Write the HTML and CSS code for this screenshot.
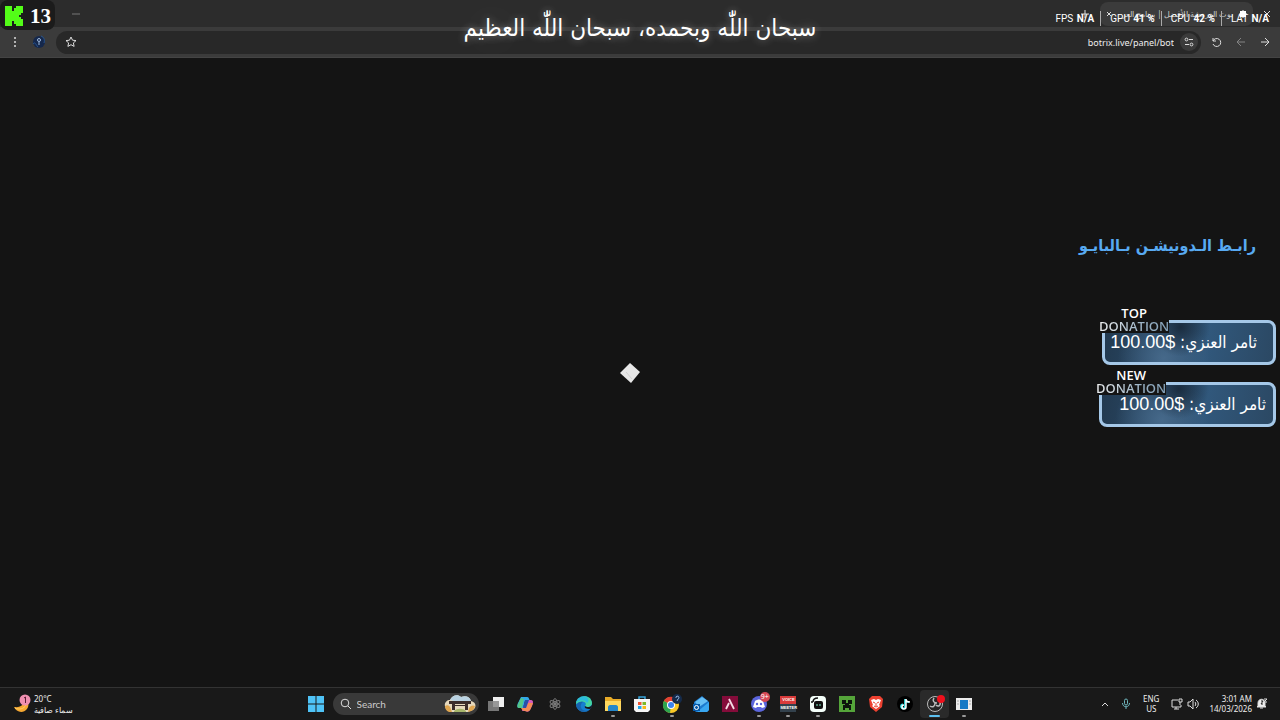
FILE: index.html
```html
<!DOCTYPE html>
<html lang="ar">
<head>
  <meta charset="UTF-8">
  <meta name="viewport" content="width=device-width, initial-scale=1.0">
  <title>Desktop</title>
  <link rel="stylesheet" href="styles.css">
</head>
<body>

  <header class="browser" dir="rtl">
    <div class="tabs">
      <button class="win-btn" aria-label="Close window"><svg width="8" height="8" viewBox="0 0 8 8"><path d="M1 1l6 6M7 1L1 7"/></svg></button>
      <div class="tab">
        <svg class="favicon" width="8" height="8" viewBox="0 0 8 8"><path d="M4 0l1 1 2 0v2l1 1-1 1v2H5L4 8 3 7H1V5L0 4l1-1V1h2z" fill="#fff" stroke="none"/></svg>
        <span class="tab-title">بوت الدردشة الأفضل | برنامج العر</span>
        <button class="tab-close" aria-label="Close tab"><svg width="6" height="6" viewBox="0 0 6 6"><path d="M1 1l4 4M5 1L1 5"/></svg></button>
      </div>
      <button class="new-tab" aria-label="New tab"><svg width="8" height="8" viewBox="0 0 8 8"><path d="M4 0v8M0 4h8"/></svg></button>
      <button class="minimize" aria-label="Minimize"><svg width="8" height="8" viewBox="0 0 8 8"><path d="M0 4h8"/></svg></button>
    </div>
    <div class="toolbar">
      <button class="tool" aria-label="Back"><svg width="10" height="10" viewBox="0 0 10 10"><path d="M1 5h8M5 1l4 4-4 4"/></svg></button>
      <button class="tool dim" aria-label="Forward"><svg width="10" height="10" viewBox="0 0 10 10"><path d="M9 5H1M5 1L1 5l4 4"/></svg></button>
      <button class="tool" aria-label="Reload"><svg width="10" height="10" viewBox="0 0 10 10"><path d="M1 1v3h3M1 4a4 4 0 1 1 0 3"/></svg></button>
      <div class="address">
        <button class="site-info" aria-label="Site information"><svg width="10" height="10" viewBox="0 0 10 10"><circle cx="2.500" cy="2.500" r="1.400"/><path d="M5 2.500h4M1 7.500h4"/><circle cx="7.500" cy="7.500" r="1.400"/></svg></button>
        <input class="url" type="text" dir="ltr" value="botrix.live/panel/bot" aria-label="Address">
        <button class="star" aria-label="Bookmark"><svg width="12" height="12" viewBox="0 0 12 12"><path d="M6 1l1.500 3.200 3.500.4-2.600 2.300.7 3.500L6 8.700l-3.100 1.700.7-3.500L1 4.600l3.500-.4z"/></svg></button>
      </div>
      <button class="tool profile" aria-label="Profile"><svg width="14" height="14" viewBox="0 0 14 14"><circle cx="7" cy="7" r="6" fill="#15284c" stroke="none"/><path d="M1 9c2-3 3 1 5 3M9 1c3 1 4 4 3 7" stroke="#28558f"/><circle cx="7" cy="5" r="1.500" stroke="#9db8dc"/><path d="M7 7v3" stroke="#9db8dc"/></svg></button>
      <button class="tool" aria-label="Menu"><svg width="4" height="12" viewBox="0 0 4 12"><g fill="#ddd" stroke="none"><circle cx="2" cy="2" r="1"/><circle cx="2" cy="6" r="1"/><circle cx="2" cy="10" r="1"/></g></svg></button>
    </div>
  </header>

  <main class="page">
    <svg class="loader" width="20" height="20" viewBox="0 0 20 20"><path d="M10 0l10 9-9 11L0 10z" fill="#e8e8e8"/><path d="M6 9l6 7" stroke="#d2d2d2"/></svg>
  </main>

  <!-- stream overlays -->
  <div class="viewers">
    <svg width="18" height="20" viewBox="0 0 18 20"><path d="M0 0h7v5h2V2h2V0h7v7h-2v2h-2v2h2v2h2v7h-7v-2H9v-3H7v5H0z" fill="#53fc18"/></svg>
    <span>13</span>
  </div>

  <div class="phrase" dir="rtl">سبحان اللّٰه وبحمده، سبحان اللّٰه العظيم</div>

  <ul class="stats">
    <li>FPS <b>N/A</b></li>
    <li>GPU <b>41 %</b></li>
    <li>CPU <b>42 %</b></li>
    <li>LAT <b>N/A</b></li>
  </ul>

  <aside class="widgets">
    <p class="bio-link" dir="rtl">رابـط الـدونيشـن بـالبايـو</p>
    <section class="donation top">
      <h2>TOP<br><span>DONATION</span></h2>
      <p dir="rtl">ثامر العنزي: <bdi dir="ltr">100.00$</bdi></p>
    </section>
    <section class="donation new">
      <h2>NEW<br><span>DONATION</span></h2>
      <p dir="rtl">ثامر العنزي: <bdi dir="ltr">100.00$</bdi></p>
    </section>
  </aside>

  <footer class="taskbar">
    <div class="weather">
      <svg width="20" height="20" viewBox="0 0 20 20"><path d="M12 5c1 5-3 9-10 8 2 5 9 7 13 2 3-4 1-8-3-10z" fill="#f6a832"/><path d="M3 14c4 2 9 1 11-3" stroke="#ffcf62" fill="none"/><circle cx="13" cy="6" r="5.500" fill="#ef8fb0"/><path d="M12 4l1.500-1v6" stroke="#5b1d35" fill="none"/></svg>
      <div>
        <div>20°C</div>
        <div dir="rtl">سماء صافية</div>
      </div>
    </div>

    <div class="dock">
      <button class="start" aria-label="Start"><svg width="16" height="16" viewBox="0 0 16 16"><path d="M0 0h7.500v7.500H0zM8.500 0H16v7.500H8.500zM0 8.500h7.500V16H0zM8.500 8.500H16V16H8.500z" fill="#4fc3f7"/></svg></button>
      <label class="search">
        <svg width="12" height="12" viewBox="0 0 12 12"><circle cx="5" cy="5" r="3.800"/><path d="M8 8l3 3"/></svg>
        <input type="text" placeholder="Search" aria-label="Search">
        <svg class="search-art" width="32" height="18" viewBox="0 0 32 18"><path d="M2 14C-1 9 2 5 6 5c2-5 8-6 11-3 5-2 9 0 10 4 5 1 6 6 2 9l-5 2H6z" fill="#e6d9bd"/><path d="M6 5c2-5 8-6 11-3 5-2 9 0 10 4H10z" fill="#b9d2e2"/><path d="M1 11c3-2 5 0 6 3l1 3H5c-3-1-4-4-4-6zM25 13c2-3 4-3 6-2-1 4-3 5-7 6z" fill="#dfa650"/><path d="M10 16c3-3 9-3 12 0v1H10z" fill="#a6b56b"/><path d="M5 6h22v3H5zM8 9h3v6H8zM21 9h3v6h-3zM11 10h10v1H11z" fill="#3c2d2b"/></svg>
      </label>
      <div class="apps">
        <button aria-label="Task view"><svg width="18" height="18" viewBox="0 0 18 18"><path d="M6 2h11v10H6z" fill="#eee"/><path d="M1 6h11v10H1z" fill="#888" opacity=".85"/></svg></button>
        <button aria-label="Copilot"><svg width="18" height="18" viewBox="0 0 18 18"><path d="M5 2h6c2 0 2 2 3 4H9L7 13H3C1 13 1 10 2 8z" fill="#32a8e8"/><path d="M2 9l3-6 3 1-2 9H3c-2 0-2-2-1-4z" fill="#53c687"/><path d="M10 5h5c3 0 2 4 1 6l-2 4c-1 2-3 2-5 1H6z" fill="#d55bbd"/><path d="M5 13h5l2-5h5l-2 5c-1 3-3 4-6 3-2 0-3-1-4-3z" fill="#f48a53"/><path d="M9 5l-2 8h3l3-8z" fill="#2750a9"/></svg></button>
        <button aria-label="Atom"><svg width="18" height="18" viewBox="0 0 18 18" fill="none" stroke="#777"><ellipse cx="9" cy="9" rx="2" ry="5.500"/><ellipse cx="9" cy="9" rx="2" ry="5.500" transform="rotate(60 9 9)"/><ellipse cx="9" cy="9" rx="2" ry="5.500" transform="rotate(120 9 9)"/><circle cx="9" cy="9" r="1" fill="#aaa"/></svg></button>
        <button aria-label="Edge"><svg width="18" height="18" viewBox="0 0 18 18"><circle cx="9" cy="9" r="8" fill="#167fd0"/><path d="M1 9C1 0 16-2 17 8c0 4-5 5-7 3 3-4-3-7-9-2z" fill="#45d5a0"/><path d="M1 8c1-5 6-7 10-6 3 1 3 5 1 6-3-4-8-3-11 0z" fill="#2bbbdc"/><path d="M8 7c-3 2-3 6 0 8 2 1 5 1 7-1-4 5-13 3-14-4 2-3 5-4 7-3z" fill="#1764ae"/><path d="M10 11c2 2 6 1 7-1 0 2-1 3-2 4-4 0-6-1-5-3z" fill="#171717"/></svg></button>
        <button class="open" aria-label="Files"><svg width="18" height="18" viewBox="0 0 18 18"><path d="M1 2h6l2 2h8v12H1z" fill="#e9ac28"/><path d="M1 6h16v10H1z" fill="#ffd85f"/><path d="M4 16v-4c0-1 1-2 2-2h6c1 0 2 1 2 2v4z" fill="#2487cc"/></svg></button>
        <button aria-label="Store"><svg width="18" height="18" viewBox="0 0 18 18"><path d="M6 5V2h6v3" fill="none" stroke="#38a5dc" stroke-width="1.500"/><path d="M1 4h16v11l-2 2H3l-2-2z" fill="#f5f5f5"/><path d="M5 7h3.500v3H5z" fill="#ee5533"/><path d="M9.500 7H13v3H9.500z" fill="#7cb928"/><path d="M5 11h3.500v3H5z" fill="#20a4e8"/><path d="M9.500 11H13v3H9.500z" fill="#f9b916"/></svg></button>
        <button class="open" aria-label="Chrome"><svg width="20" height="20" viewBox="0 0 20 20"><circle cx="9" cy="11" r="8" fill="#fbc926"/><path d="M9 11L2 7a8 8 0 0 1 14 0z" fill="#e44134"/><path d="M9 11l-1 8A8 8 0 0 1 2 7z" fill="#2ea44f"/><circle cx="9" cy="11" r="4" fill="#fff"/><circle cx="9" cy="11" r="3" fill="#3d83ed"/><circle cx="15" cy="5" r="5" fill="#152b4b"/><path d="M14 4a1.500 1.500 0 1 1 2 1l-1 2" stroke="#8fb2dc" fill="none"/></svg></button>
        <button aria-label="Outlook"><svg width="18" height="18" viewBox="0 0 18 18"><path d="M2 7l8-6 7 6v8l-2 2H4l-2-2z" fill="#1c79ce"/><path d="M3 7l7-5 6 4-9 6z" fill="#66bff5"/><path d="M17 7v8l-2 2H5z" fill="#39a7f1"/><path d="M1 9h7v7H1z" fill="#075aa9"/><circle cx="4.500" cy="12.500" r="2" fill="none" stroke="#fff"/></svg></button>
        <button aria-label="AMD"><svg width="18" height="18" viewBox="0 0 18 18"><path d="M1 1h16v16H1z" fill="#840c3a"/><path d="M5 14L8 8M8 4l5 10" fill="none" stroke="#f5dce5" stroke-width="1.800"/></svg></button>
        <button class="open" aria-label="Discord"><svg width="18" height="18" viewBox="0 0 18 18"><circle cx="9" cy="9" r="8" fill="#5b65dc"/><path d="M5 6c3-2 5-2 8 0l2 6-3 1-1-1H7l-1 1-3-1z" fill="#fff"/><circle cx="7" cy="9" r="1.200" fill="#5b65dc"/><circle cx="11" cy="9" r="1.200" fill="#5b65dc"/></svg><span class="count">9+</span></button>
        <button class="open" aria-label="Voicemeeter"><span class="voice"><span>VOICE</span><span>MEETER</span></span></button>
        <button class="open" aria-label="Streamlabs"><svg width="18" height="18" viewBox="0 0 18 18"><rect x="1" y="1" width="16" height="16" rx="4" fill="#f4fffa"/><path d="M4 7c0-3 2-4 5-4M4 7H2" stroke="#111" stroke-width="1.500" fill="none"/><rect x="5" y="6" width="9" height="8" rx="2" fill="#111"/><path d="M8 9v2M11 9v2" stroke="#7ff0c8"/></svg></button>
        <button aria-label="Minecraft"><svg width="18" height="18" viewBox="0 0 18 18"><path d="M1 1h16v16H1z" fill="#55a53a"/><path d="M4 5h4v3h2V5h4v4h-3v1h2v5h-2v-2H7v2H5v-5h2V9H4z" fill="#0c160c"/></svg></button>
        <button aria-label="Brave"><svg width="18" height="18" viewBox="0 0 18 18"><path d="M5 1h8l3 3-1 8-6 5-6-5-1-8z" fill="#ed4130"/><path d="M4 5l3-1 2 1 2-1 3 1-2 5 1 1-4 3-4-3 1-1z" fill="#fff"/><path d="M6 7l2 1M12 7l-2 1M9 8v3M7 11l2 1 2-1" stroke="#ed4130" fill="none"/></svg></button>
        <button aria-label="TikTok"><svg width="18" height="18" viewBox="0 0 18 18" fill="none"><circle cx="9" cy="9" r="8" fill="#000"/><path d="M9 4v7.500a2 2 0 1 1-2-2M9 4c0 2 2 3 4 3" stroke="#35dfe3" stroke-width="1.800"/><path d="M10 4v8a2 2 0 1 1-2-2M10 4c0 2 2 3 4 3" stroke="#fff" stroke-width="1.500"/></svg></button>
        <button class="open active" aria-label="OBS"><svg width="20" height="20" viewBox="0 0 20 20" fill="none"><circle cx="10" cy="10" r="7.500" fill="#262626" stroke="#bbb"/><path d="M9 4c-2 3 0 5 3 5M15 8c1 4-2 5-4 3M5 12c3 2 5 0 5-3" stroke="#bbb" stroke-width="1.500"/><circle cx="16" cy="5" r="4" fill="#f0101c"/></svg></button>
        <button class="open" aria-label="Window"><svg width="18" height="18" viewBox="0 0 18 18"><path d="M1 3h16v12H1z" fill="#ececec"/><path d="M5 5h8v9H5z" fill="#1679c5"/><path d="M14 6h2M14 9h2M2 6h2M2 9h2" stroke="#aaa"/></svg></button>
      </div>
    </div>

    <div class="tray">
      <button aria-label="Hidden icons"><svg width="8" height="6" viewBox="0 0 8 6"><path d="M1 5l3-3 3 3"/></svg></button>
      <button aria-label="Microphone"><svg class="mic" width="10" height="12" viewBox="0 0 10 12"><rect x="3.500" y="1" width="3" height="6" rx="1.500"/><path d="M1.500 5c0 5 7 5 7 0M5 9v2"/></svg></button>
      <div class="lang">ENG<br>US</div>
      <button class="net" aria-label="Network and sound">
        <svg width="12" height="12" viewBox="0 0 12 12"><path d="M7 2H1v7h9V7M3 11h5M5 9v2M8 1h3v3H8zM9 4v3"/></svg>
        <svg width="12" height="12" viewBox="0 0 12 12"><path d="M1 4h2l3-3v10L3 8H1zM8 4c1 1 1 3 0 4M9 2c3 2 3 6 0 8"/></svg>
      </button>
      <div class="clock">3:01 AM<br>14/03/2026</div>
      <button aria-label="Notifications"><svg width="12" height="12" viewBox="0 0 12 12"><path d="M2 8V5c0-5 7-5 7 0v3l1 1H1zM4 10h3" fill="#eee"/><path d="M5 3h2L5 6h2" stroke="#222"/><path d="M8 1h3L8 4h3"/></svg></button>
    </div>
  </footer>

</body>
</html>
```
FILE: styles.css
```css
* {
  margin: 0;
  padding: 0;
  box-sizing: border-box;
}

body {
  min-height: 100vh;
  display: flex;
  flex-direction: column;
  position: relative;
  overflow: hidden;
  background: #141414;
  color: #eee;
  font-family: "Noto Sans", "Open Sans", sans-serif;
  font-size: 8px;
}

button,
input {
  border: 0;
  background: none;
  color: inherit;
  font-family: inherit;
}

button {
  display: flex;
  align-items: center;
  justify-content: center;
  flex-shrink: 0;
}

svg {
  display: block;
  flex-shrink: 0;
}

/* browser */
.browser {
  background: #3b3b3b;
  border-bottom: 1px solid #444;
}

.browser svg,
.tray svg,
.search > svg:first-child {
  fill: none;
  stroke: #ddd;
}

.tabs {
  display: flex;
  align-items: center;
  height: 27px;
  background: #2c2c2c;
}

.win-btn {
  width: 27px;
  height: 27px;
}

.tab {
  display: flex;
  align-items: center;
  gap: 6px;
  width: 153px;
  height: 24px;
  padding: 0 6px;
  border-radius: 8px;
  background: #3b3b3b;
}

.tab-title {
  flex: 1;
  overflow: hidden;
  white-space: nowrap;
  font-size: 8px;
  color: #ccc;
}

.new-tab {
  width: 30px;
}

.minimize {
  margin-right: auto;
  margin-left: 72px;
}

.minimize svg {
  stroke: #777;
}

.toolbar {
  display: flex;
  align-items: center;
  height: 30px;
  padding: 0 3px;
}

.tool {
  width: 24px;
  height: 24px;
}

.dim {
  opacity: .45;
}

.address {
  flex: 1;
  display: flex;
  align-items: center;
  gap: 6px;
  height: 23px;
  margin: 0 4px 0 5px;
  padding: 0 3px 0 9px;
  border-radius: 12px;
  background: #282828;
}

.site-info {
  width: 18px;
  height: 18px;
  border-radius: 50%;
  background: #3b3b3b;
}

.url {
  flex: 1;
  min-width: 0;
  text-align: right;
  font-size: 9px;
}

/* page */
.page {
  flex: 1;
  display: flex;
  align-items: center;
  justify-content: center;
  padding-right: 20px;
}

/* overlays */
.viewers {
  position: absolute;
  top: 0;
  left: 0;
  display: flex;
  align-items: center;
  gap: 7px;
  height: 30px;
  padding: 2px 4px 0 5px;
  border-radius: 8px;
  background: #1b1b1b;
  color: #fff;
  font: bold 21px/28px "Liberation Serif", serif;
}

.phrase {
  position: absolute;
  top: 4px;
  left: 0;
  right: 0;
  color: #fff;
  font-family: "DejaVu Sans Condensed", "DejaVu Sans", sans-serif;
  font-size: 24px;
  line-height: 48px;
  text-align: center;
  text-shadow: 0 0 8px rgba(255, 255, 255, .4), 0 0 40px rgba(255, 255, 255, .3);
}

.stats {
  position: absolute;
  top: 11px;
  right: 11px;
  display: flex;
  list-style: none;
  color: #fff;
  font: 10px/15px Roboto, sans-serif;
}

.stats li + li {
  margin-left: 6px;
  padding-left: 9px;
  border-left: 1px solid #aaa;
}

.stats b {
  margin-left: 1px;
}

.widgets {
  position: absolute;
  top: 230px;
  right: 4px;
  display: flex;
  flex-direction: column;
  align-items: flex-end;
}

.bio-link {
  margin-right: 20px;
  margin-bottom: 44px;
  color: #58aaf2;
  font: bold 16px/32px "DejaVu Sans Condensed", "DejaVu Sans", sans-serif;
}

.donation {
  position: relative;
  width: 177px;
  height: 45px;
  margin-top: 14px;
  border: 3px solid #a5c8e8;
  border-radius: 8px;
  background: radial-gradient(circle at 45% 10%, #1a2c3f, transparent 30%), radial-gradient(circle at 35% 90%, #46698a, transparent 40%), linear-gradient(100deg, #22394f, #31587c 60%, #2b4863);
}

.donation + .donation {
  margin-top: 17px;
}

.donation h2 {
  position: absolute;
  top: -16px;
  left: -6px;
  background: #141414;
  color: #fff;
  font: 600 13px/13px "Open Sans", sans-serif;
  text-align: center;
}

.donation h2 span {
  background: linear-gradient(100deg, #eee, #9db4c6 60%, #7f9db5);
  color: transparent;
  -webkit-background-clip: text;
  background-clip: text;
}

.donation p {
  padding: 0 7px;
  color: #fff;
  font: 17px/38px "DejaVu Sans Condensed", "DejaVu Sans", sans-serif;
  white-space: nowrap;
}

.donation bdi {
  font: 18px/38px "Liberation Sans", sans-serif;
}

.top {
  width: 174px;
}

.top p {
  padding-right: 16px;
}

/* taskbar */
.taskbar {
  display: grid;
  grid-template-columns: 1fr auto 1fr;
  align-items: center;
  height: 33px;
  border-top: 1px solid #333;
  background: #191919;
}

.weather {
  display: flex;
  align-items: center;
  gap: 2px;
  padding-left: 12px;
  line-height: 11px;
}

.dock,
.apps {
  display: flex;
  align-items: center;
}

.dock {
  gap: 3px;
}

.start {
  width: 28px;
  height: 28px;
}

.search {
  display: flex;
  align-items: center;
  gap: 5px;
  width: 146px;
  height: 22px;
  padding: 0 3px 0 7px;
  border-radius: 11px;
  background: #393939;
}

.search input {
  flex: 1;
  min-width: 0;
  font: 10px/14px Lato, sans-serif;
}

.search input::placeholder {
  color: #ccc;
}

.apps {
  width: 497px;
}

.apps button {
  position: relative;
  flex: 1;
  height: 28px;
  border-radius: 4px;
}

.apps .open::after {
  content: "";
  position: absolute;
  bottom: 1px;
  width: 4px;
  height: 2px;
  border-radius: 1px;
  background: #999;
}

.apps .active {
  background: #2a2a2a;
}

.apps .active::after {
  width: 11px;
  background: #5cc0ef;
}

.count {
  position: absolute;
  top: 2px;
  right: 4px;
  width: 10px;
  height: 10px;
  border-radius: 50%;
  background: #d54855;
  color: #fff;
  font-size: 7px;
  line-height: 10px;
}

.voice {
  display: flex;
  flex-direction: column;
  width: 16px;
  font: bold 4px/8px "Liberation Sans", sans-serif;
  text-align: center;
}

.voice span {
  background: #d93b3b;
  color: #fff;
}

.voice span + span {
  background: #33414c;
}

.tray {
  display: flex;
  align-items: center;
  justify-content: flex-end;
  gap: 12px;
  padding-right: 12px;
  line-height: 10px;
}

.tray .mic {
  stroke: #6fb6bd;
}

.lang {
  text-align: center;
}

.net {
  gap: 4px;
}

.clock {
  margin: 0 -8px 0 -2px;
  text-align: right;
}
```
